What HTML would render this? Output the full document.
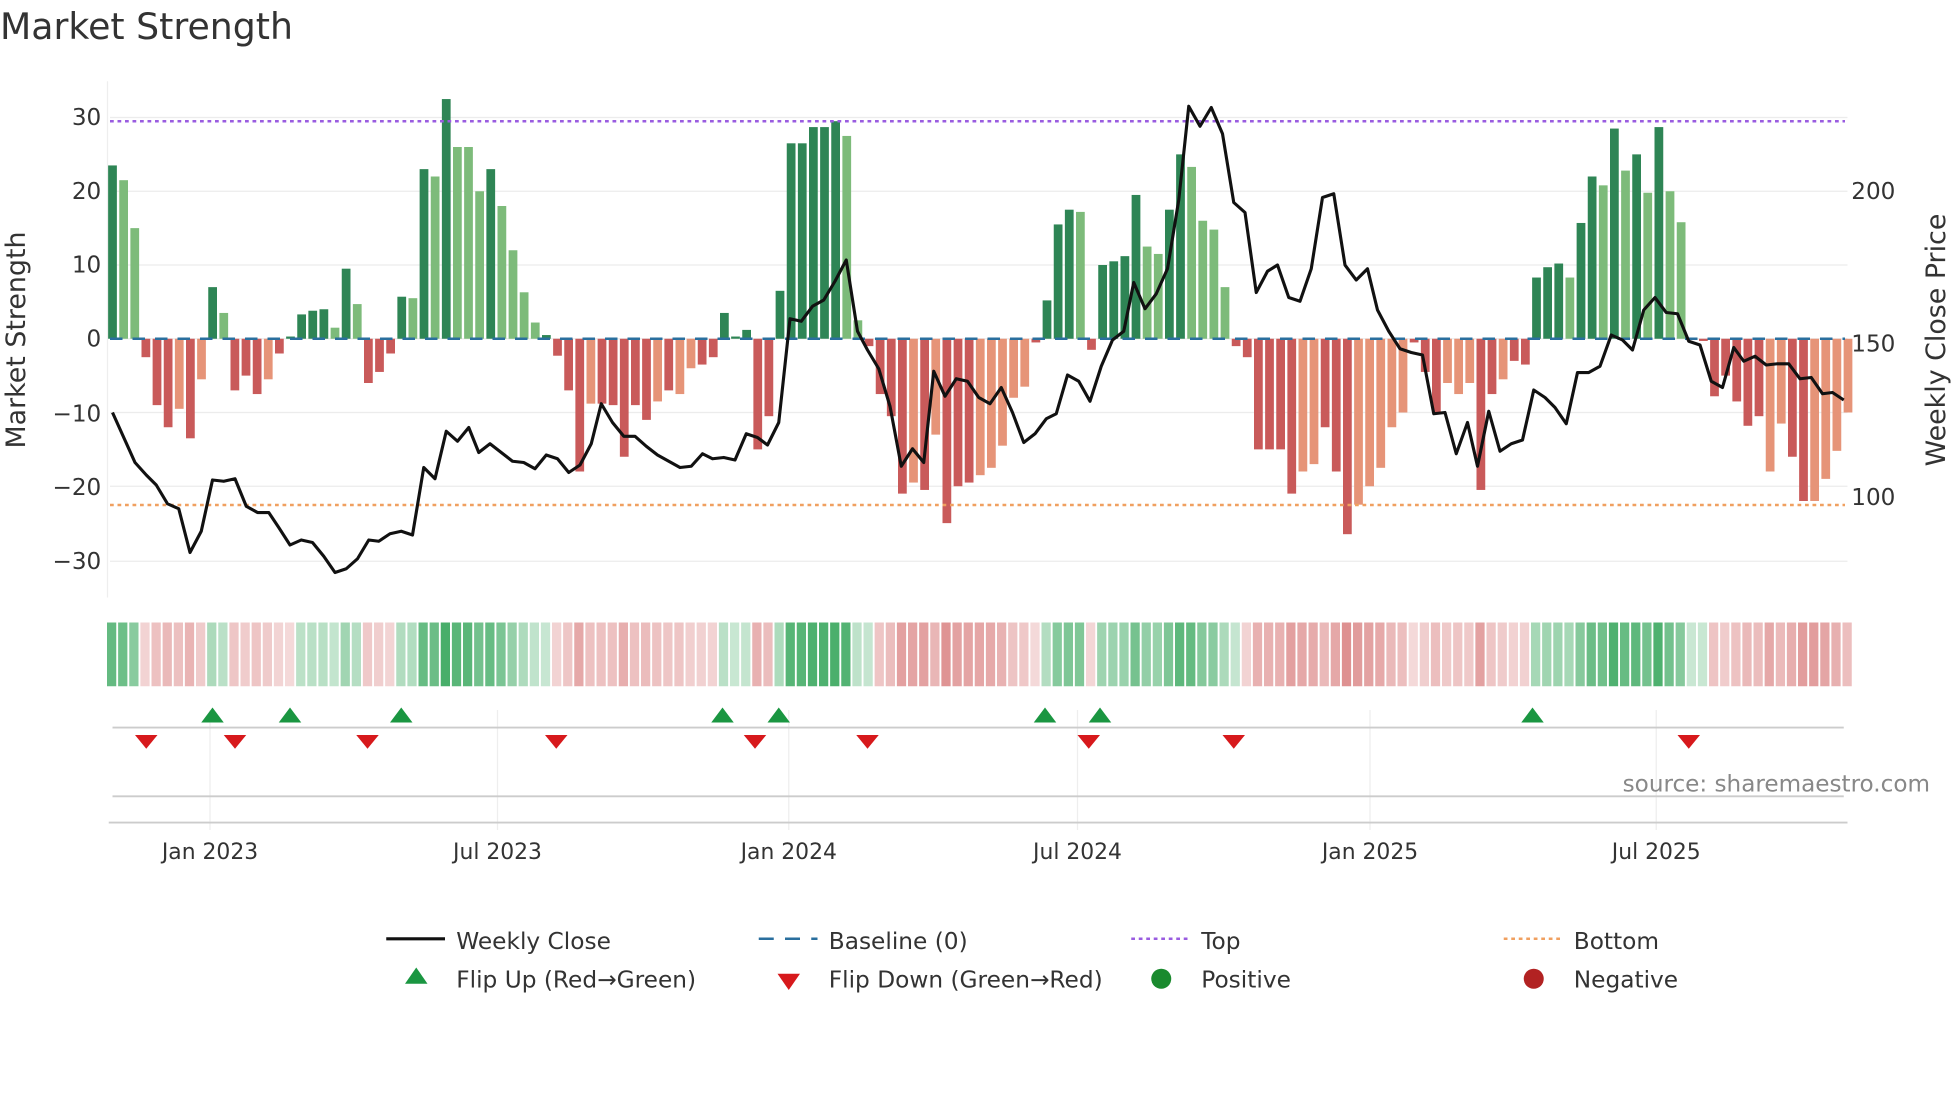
<!DOCTYPE html>
<html><head><meta charset="utf-8"><style>
html,body{margin:0;padding:0;background:#fff;width:1960px;height:1102px;overflow:hidden}
svg{display:block}
text{font-family:"DejaVu Sans","Liberation Sans",sans-serif;fill:#333}
</style></head><body>
<svg id="s" width="1960" height="1102" viewBox="0 0 1568 881.6" preserveAspectRatio="none" xmlns="http://www.w3.org/2000/svg">
<text x="0" y="31" font-size="29">Market Strength</text>
<g id="grid" stroke="#ececec" stroke-width="1"></g>
<line x1="86" y1="65" x2="86" y2="478" stroke="#eee"/>
<g id="bars"></g>
<line x1="88" y1="97" x2="1476" y2="97" stroke="#9a5ce0" stroke-width="2" stroke-dasharray="3,3"/>
<line x1="88" y1="404" x2="1476" y2="404" stroke="#f0a060" stroke-width="2" stroke-dasharray="3,3"/>
<line x1="88" y1="271" x2="1476" y2="271" stroke="#2a6f9e" stroke-width="2" stroke-dasharray="10,8"/>
<polyline id="price" fill="none" stroke="#111" stroke-width="2.5" stroke-linejoin="round"></polyline>
<g font-size="18.5">
<text x="81" y="100" text-anchor="end">30</text>
<text x="81" y="159" text-anchor="end">20</text>
<text x="81" y="218" text-anchor="end">10</text>
<text x="81" y="277" text-anchor="end">0</text>
<text x="81" y="337" text-anchor="end">−10</text>
<text x="81" y="396" text-anchor="end">−20</text>
<text x="81" y="455" text-anchor="end">−30</text>
<text x="1481" y="159">200</text>
<text x="1481" y="281">150</text>
<text x="1481" y="404">100</text>
</g>
<text font-size="21.5" transform="translate(20,272) rotate(-90)" text-anchor="middle">Market Strength</text>
<text font-size="21.5" transform="translate(1556,272) rotate(-90)" text-anchor="middle">Weekly Close Price</text>
<g id="strip"></g>
<g id="vg" stroke="#eee"></g>
<line x1="90" y1="582" x2="1475" y2="582" stroke="#ccc" stroke-width="1.5"/>
<line x1="90" y1="637" x2="1475" y2="637" stroke="#ccc" stroke-width="1.5"/>
<line x1="87" y1="658" x2="1478" y2="658" stroke="#ccc" stroke-width="1.5"/>
<g id="marks"></g>
<text x="1544" y="633" font-size="18.5" text-anchor="end" style="fill:#888">source: sharemaestro.com</text>
<g font-size="17.5" text-anchor="middle">
<text x="168" y="687">Jan 2023</text>
<text x="398" y="687">Jul 2023</text>
<text x="631" y="687">Jan 2024</text>
<text x="862" y="687">Jul 2024</text>
<text x="1096" y="687">Jan 2025</text>
<text x="1325" y="687">Jul 2025</text>
</g>
<g font-size="18.6">
<line x1="309" y1="751" x2="356" y2="751" stroke="#111" stroke-width="2.5"/>
<text x="365" y="759">Weekly Close</text>
<line x1="607" y1="751" x2="654" y2="751" stroke="#2a6f9e" stroke-width="2" stroke-dasharray="12,9"/>
<text x="663" y="759">Baseline (0)</text>
<line x1="905" y1="751" x2="950" y2="751" stroke="#9a5ce0" stroke-width="2" stroke-dasharray="3,3"/>
<text x="961" y="759">Top</text>
<line x1="1203" y1="751" x2="1248" y2="751" stroke="#f0a060" stroke-width="2" stroke-dasharray="3,3"/>
<text x="1259" y="759">Bottom</text>
<polygon points="333,774 342,787 324,787" fill="#1a9641"/>
<text x="365" y="790">Flip Up (Red→Green)</text>
<polygon points="622,779 640,779 631,792" fill="#d7191c"/>
<text x="663" y="790">Flip Down (Green→Red)</text>
<circle cx="929" cy="783" r="8" fill="#1a8a2e"/>
<text x="961" y="790">Positive</text>
<circle cx="1227" cy="783" r="8" fill="#b22222"/>
<text x="1259" y="790">Negative</text>
</g>
</svg>
<script>
var NS="http://www.w3.org/2000/svg";
function el(t,a,p){var e=document.createElementNS(NS,t);for(var k in a)e.setAttribute(k,a[k]);document.getElementById(p).appendChild(e);return e;}
[94,153,212,271,330,389,449].forEach(function(y){el("line",{x1:88,x2:1478,y1:y,y2:y},"grid");});
var v=[23.5,21.5,15,-2.5,-9,-12,-9.5,-13.5,-5.5,7,3.5,-7,-5,-7.5,-5.5,-2,0.3,3.3,3.8,4,1.5,9.5,4.7,-6,-4.5,-2,5.7,5.5,23,22,32.5,26,26,20,23,18,12,6.3,2.2,0.5,-2.3,-7,-18,-8.8,-8.8,-9,-16,-9,-11,-8.5,-7,-7.5,-4,-3.5,-2.5,3.5,0.3,1.2,-15,-10.5,6.5,26.5,26.5,28.7,28.7,29.5,27.5,2.5,-1,-7.5,-10.5,-21,-19.5,-20.5,-13,-25,-20,-19.5,-18.5,-17.5,-14.5,-8,-6.5,-0.5,5.2,15.5,17.5,17.2,-1.5,10,10.5,11.2,19.5,12.5,11.5,17.5,25,23.3,16,14.8,7,-1,-2.5,-15,-15,-15,-21,-18,-17,-12,-18,-26.5,-22.5,-20,-17.5,-12,-10,-0.5,-4.5,-10,-6,-7.5,-6,-20.5,-7.5,-5.5,-3,-3.5,8.3,9.7,10.2,8.3,15.7,22,20.8,28.5,22.8,25,19.8,28.7,20,15.8,0,-0.3,-7.8,-5,-8.5,-11.8,-10.5,-18,-11.5,-16,-22,-22,-19,-15.2,-10];
var light=[1,2,6,8,10,14,20,22,27,29,31,32,33,35,36,37,38,43,49,52,66,67,72,74,87,93,94,97,98,99,100,107,108,112,113,114,115,116,125,131,134,136,138,140,141,149,150,153,154,155,156,51,78,79,80,81,82,120,121,122];
var L={};light.forEach(function(i){L[i]=1;});
var prev=1;
v.forEach(function(val,i){
 var x=90+8.9*i, h=Math.abs(val)*5.9, y=val>=0?271-h:271;
 var pos=val>=0;
 var c=pos?(L[i]?"#7dbb7a":"#2e8555"):(L[i]?"#e69478":"#c95a5a");
 el("rect",{x:x-3.5,y:y,width:7,height:Math.max(h,0.5),fill:c},"bars");
 var s=val>1?1:(val<-1?-1:prev); prev=s;
 var m=Math.min(Math.abs(val)/30,1);
 var col;
 if(s>0){var a=0.25+0.6*m;col="rgba(40,160,80,"+a+")";}else{var a=0.2+0.45*m;col="rgba(200,70,70,"+a+")";}
 el("rect",{x:x-4.4,y:498,width:7.4,height:51,fill:col},"strip");
});
var p="90,330 99,350 108,370 117,380 125,388 134,403 143,407 152,442 161,425 170,384 179,385 188,383 197,405 206,410 215,410 223,422 232,436 241,432 250,434 259,445 268,458 277,455 286,447 295,432 303,433 312,427 321,425 330,428 339,374 348,383 357,345 366,353 375,342 383,362 392,355 401,362 410,369 419,370 428,375 437,364 446,367 455,378 464,372 473,355 481,323 490,338 499,349 508,349 517,357 526,364 535,369 544,374 553,373 562,363 570,367 579,366 588,368 597,347 606,350 614,356 623,338 632,255 641,257 650,245 659,240 668,225 677,208 686,265 694,280 703,295 712,325 721,373 730,359 739,370 747,297 756,317 765,303 774,305 783,318 792,323 801,310 810,330 819,354 828,347 837,335 845,331 854,300 863,305 872,321 881,293 890,272 899,265 907,226 916,247 925,235 934,215 943,160 951,85 960,101 969,86 978,107 987,162 996,170 1005,234 1014,217 1022,212 1031,238 1040,241 1049,215 1058,158 1067,155 1076,212 1085,224 1094,215 1102,248 1111,265 1120,279 1129,282 1138,284 1147,331 1156,330 1165,363 1174,338 1182,373 1191,329 1200,361 1209,355 1218,352 1227,312 1236,318 1244,326 1253,339 1262,298 1271,298 1280,293 1289,268 1298,272 1306,280 1315,248 1324,238 1333,250 1342,251 1351,273 1360,276 1369,305 1378,310 1387,278 1395,289 1404,285 1413,292 1422,291 1431,291 1440,303 1449,302 1458,315 1466,314 1475,320";
document.getElementById("price").setAttribute("points",p);
[168,398,631,862,1096,1325].forEach(function(x){el("line",{x1:x,x2:x,y1:568,y2:664},"vg");});
[170,232,321,578,623,836,880,1226].forEach(function(x){el("polygon",{points:(x)+",566 "+(x+9)+",578 "+(x-9)+",578",fill:"#1a9641"},"marks");});
[117,188,294,445,604,694,871,987,1351].forEach(function(x){el("polygon",{points:(x-9)+",588 "+(x+9)+",588 "+x+",599",fill:"#d7191c"},"marks");});
</script>
</body></html>
